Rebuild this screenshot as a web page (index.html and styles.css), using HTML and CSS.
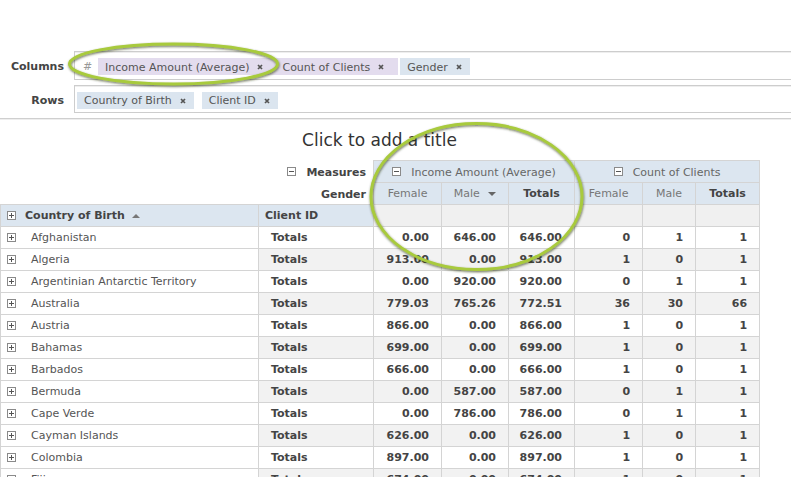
FILE: index.html
```html
<!DOCTYPE html>
<html>
<head>
<meta charset="utf-8">
<link rel="stylesheet" href="styles.css">
</head>
<body>
<div class="axes">
  <div class="axis-row">
    <div class="axis-label">Columns</div>
    <div class="drop drop-cols">
      <span class="hash">#</span>
      <span class="measure-group">
        <span class="chip chip-m">Income Amount (Average) <svg class="x" viewBox="0 0 6 6"><path d="M1 1L5 5M5 1L1 5"/></svg></span>
        <span class="chip chip-m">Count of Clients <svg class="x" viewBox="0 0 6 6"><path d="M1 1L5 5M5 1L1 5"/></svg></span>
      </span>
      <span class="chip chip-d">Gender <svg class="x" viewBox="0 0 6 6"><path d="M1 1L5 5M5 1L1 5"/></svg></span>
    </div>
  </div>
  <div class="axis-row">
    <div class="axis-label">Rows</div>
    <div class="drop drop-rows">
      <span class="chip chip-d">Country of Birth <svg class="x" viewBox="0 0 6 6"><path d="M1 1L5 5M5 1L1 5"/></svg></span>
      <span class="chip chip-d">Client ID <svg class="x" viewBox="0 0 6 6"><path d="M1 1L5 5M5 1L1 5"/></svg></span>
    </div>
  </div>
</div>

<div class="report">
  <div class="title">Click to add a title</div>
  <table class="pivot">
    <colgroup>
      <col class="c-country"><col class="c-client"><col class="c-a"><col class="c-b"><col class="c-c"><col class="c-d"><col class="c-e"><col class="c-f">
    </colgroup>
    <tr class="h1">
      <td colspan="2" class="axis-name"><span class="box minus"></span><span class="axis-text">Measures</span></td>
      <td colspan="3" class="mhead"><span class="box minus"></span><span class="mtext">Income Amount (Average)</span></td>
      <td colspan="3" class="mhead"><span class="box minus"></span><span class="mtext">Count of Clients</span></td>
    </tr>
    <tr class="h2">
      <td colspan="2" class="axis-name"><span class="axis-text">Gender</span></td>
      <td class="ghead">Female</td>
      <td class="ghead">Male <span class="tri-down"></span></td>
      <td class="ghead tot">Totals</td>
      <td class="ghead">Female</td>
      <td class="ghead">Male</td>
      <td class="ghead tot">Totals</td>
    </tr>
    <tr class="h3">
      <td class="rhead"><span class="box plus"></span><span class="rtext">Country of Birth</span><span class="tri-up"></span></td>
      <td class="rhead chead">Client ID</td>
      <td class="blank"></td><td class="blank"></td><td class="blank"></td><td class="blank"></td><td class="blank"></td><td class="blank"></td>
    </tr>
    <tr><td class="country"><span class="box plus"></span><span class="ctext">Afghanistan</span></td><td class="client">Totals</td><td class="num">0.00</td><td class="num">646.00</td><td class="num">646.00</td><td class="num">0</td><td class="num">1</td><td class="num">1</td></tr>
    <tr class="alt"><td class="country"><span class="box plus"></span><span class="ctext">Algeria</span></td><td class="client">Totals</td><td class="num">913.00</td><td class="num">0.00</td><td class="num">913.00</td><td class="num">1</td><td class="num">0</td><td class="num">1</td></tr>
    <tr><td class="country"><span class="box plus"></span><span class="ctext">Argentinian Antarctic Territory</span></td><td class="client">Totals</td><td class="num">0.00</td><td class="num">920.00</td><td class="num">920.00</td><td class="num">0</td><td class="num">1</td><td class="num">1</td></tr>
    <tr class="alt"><td class="country"><span class="box plus"></span><span class="ctext">Australia</span></td><td class="client">Totals</td><td class="num">779.03</td><td class="num">765.26</td><td class="num">772.51</td><td class="num">36</td><td class="num">30</td><td class="num">66</td></tr>
    <tr><td class="country"><span class="box plus"></span><span class="ctext">Austria</span></td><td class="client">Totals</td><td class="num">866.00</td><td class="num">0.00</td><td class="num">866.00</td><td class="num">1</td><td class="num">0</td><td class="num">1</td></tr>
    <tr class="alt"><td class="country"><span class="box plus"></span><span class="ctext">Bahamas</span></td><td class="client">Totals</td><td class="num">699.00</td><td class="num">0.00</td><td class="num">699.00</td><td class="num">1</td><td class="num">0</td><td class="num">1</td></tr>
    <tr><td class="country"><span class="box plus"></span><span class="ctext">Barbados</span></td><td class="client">Totals</td><td class="num">666.00</td><td class="num">0.00</td><td class="num">666.00</td><td class="num">1</td><td class="num">0</td><td class="num">1</td></tr>
    <tr class="alt"><td class="country"><span class="box plus"></span><span class="ctext">Bermuda</span></td><td class="client">Totals</td><td class="num">0.00</td><td class="num">587.00</td><td class="num">587.00</td><td class="num">0</td><td class="num">1</td><td class="num">1</td></tr>
    <tr><td class="country"><span class="box plus"></span><span class="ctext">Cape Verde</span></td><td class="client">Totals</td><td class="num">0.00</td><td class="num">786.00</td><td class="num">786.00</td><td class="num">0</td><td class="num">1</td><td class="num">1</td></tr>
    <tr class="alt"><td class="country"><span class="box plus"></span><span class="ctext">Cayman Islands</span></td><td class="client">Totals</td><td class="num">626.00</td><td class="num">0.00</td><td class="num">626.00</td><td class="num">1</td><td class="num">0</td><td class="num">1</td></tr>
    <tr><td class="country"><span class="box plus"></span><span class="ctext">Colombia</span></td><td class="client">Totals</td><td class="num">897.00</td><td class="num">0.00</td><td class="num">897.00</td><td class="num">1</td><td class="num">0</td><td class="num">1</td></tr>
    <tr class="alt"><td class="country"><span class="box plus"></span><span class="ctext">Fiji</span></td><td class="client">Totals</td><td class="num">674.00</td><td class="num">0.00</td><td class="num">674.00</td><td class="num">1</td><td class="num">0</td><td class="num">1</td></tr>
  </table>
</div>

<svg class="marks" width="791" height="477" viewBox="0 0 791 477">
  <defs>
    <filter id="sh" x="-10%" y="-20%" width="120%" height="140%">
      <feDropShadow dx="0.5" dy="1.2" stdDeviation="1" flood-color="#2b3310" flood-opacity="0.7"/>
    </filter>
  </defs>
  <ellipse cx="173.5" cy="64" rx="104" ry="20" filter="url(#sh)"/>
  <ellipse cx="476.5" cy="196.5" rx="105.5" ry="73" filter="url(#sh)"/>
</svg>
</body>
</html>
```
FILE: styles.css
```css
* { box-sizing: border-box; }
html, body { margin: 0; padding: 0; }
body {
  width: 791px;
  height: 477px;
  overflow: hidden;
  position: relative;
  background: #fff;
  font-family: "DejaVu Sans", Verdana, sans-serif;
  font-size: 11px;
  color: #444;
}

/* axis drop zones */
.axes {
  padding-top: 51px;
  padding-bottom: 5px;
  border-bottom: 1px solid #cfcfcf;
  display: flex;
  flex-direction: column;
  gap: 5px;
  box-shadow: 0 1px 0 #eee;
}
.axis-row { display: flex; align-items: center; }
.axis-label {
  width: 64px;
  margin-right: 10px;
  padding-top: 2px;
  text-align: right;
  font-weight: bold;
  color: #444;
  flex: none;
}
.drop {
  flex: none;
  width: 760px;
  border: 1px solid #cdcdcd;
  box-shadow: inset 0 1px 0 #eee;
  display: flex;
  align-items: center;
}
.drop-cols { height: 29px; padding-left: 8px; padding-top: 2px; }
.drop-rows { height: 28px; padding-left: 2px; padding-top: 2px; gap: 8px; }
.hash { color: #999; width: 15px; flex: none; }
.measure-group {
  display: flex;
  gap: 4px;
  background: #e3dcee;
  padding-right: 6px;
  margin-right: 2px;
}
.chip {
  display: flex;
  align-items: center;
  height: 17px;
  padding: 1px 8px 0 7px;
  gap: 8px;
  color: #555;
  white-space: nowrap;
}
.chip-m { background: #e3dcee; }
.chip-d { background: #dbe5ef; }
.x { width: 6px; height: 6px; }
.x path { stroke: #555; stroke-width: 1.7; fill: none; }

/* report */
.report { width: 759px; }
.title {
  text-align: center;
  font-size: 17px;
  line-height: 22px;
  padding-top: 10px;
  height: 41px;
  color: #333;
}
.pivot {
  border-collapse: collapse;
  table-layout: fixed;
  width: 759px;
}
.c-country { width: 258px; }
.c-client { width: 115px; }
.c-a { width: 68px; }
.c-b { width: 67px; }
.c-c { width: 66px; }
.c-d { width: 68px; }
.c-e { width: 53px; }
.c-f { width: 64px; }
.pivot tr { height: 22px; }
.pivot td {
  border: 1px solid #d4d4d4;
  padding: 0;
  white-space: nowrap;
  overflow: hidden;
  vertical-align: middle;
}
.pivot td.axis-name {
  border: none;
  text-align: right;
  padding-right: 7px;
  font-weight: bold;
  color: #444;
}
.axis-text { vertical-align: middle; }
.axis-name .box { margin-right: 10px; }
.mhead {
  background: #dce6f0;
  text-align: center;
  color: #666;
}
.mhead .box { margin-right: 10px; }
.mtext { vertical-align: middle; }
.ghead {
  background: #dce6f0;
  text-align: center;
  color: #777;
}
.ghead.tot { font-weight: bold; color: #444; }
.rhead {
  background: #dce6f0;
  font-weight: bold;
  color: #444;
  padding-left: 6px !important;
}
.rtext { margin-left: 9px; vertical-align: middle; }
.chead { padding-left: 6px !important; }
.blank { background: #f0f0f0; }

.box {
  display: inline-block;
  position: relative;
  width: 9px;
  height: 9px;
  border: 1px solid #8a8a8a;
  background: #fff;
  vertical-align: middle;
}
.box::before {
  content: "";
  position: absolute;
  left: 1px; top: 3px;
  width: 5px; height: 1px;
  background: #555;
}
.box.plus::after {
  content: "";
  position: absolute;
  left: 3px; top: 1px;
  width: 1px; height: 5px;
  background: #555;
}
.tri-up, .tri-down {
  display: inline-block;
  width: 0; height: 0;
  border-left: 4px solid transparent;
  border-right: 4px solid transparent;
  vertical-align: middle;
  margin-left: 7px;
}
.tri-up { border-bottom: 4px solid #777; }
.tri-down { border-top: 4px solid #666; margin-left: 5px; }

.country { padding-left: 6px !important; color: #555; background: #fff; }
.ctext { margin-left: 15px; vertical-align: middle; }
.client { padding-left: 12px !important; font-weight: bold; color: #444; }
.num {
  text-align: right;
  padding-right: 12px !important;
  font-weight: bold;
  color: #444;
}
.alt .client, .alt .num { background: #f2f2f2; }

/* annotation rings */
.marks {
  position: absolute;
  left: 0; top: 0;
  pointer-events: none;
}
.marks ellipse {
  fill: none;
  stroke: #a8ca3c;
  stroke-width: 3;
}
```
